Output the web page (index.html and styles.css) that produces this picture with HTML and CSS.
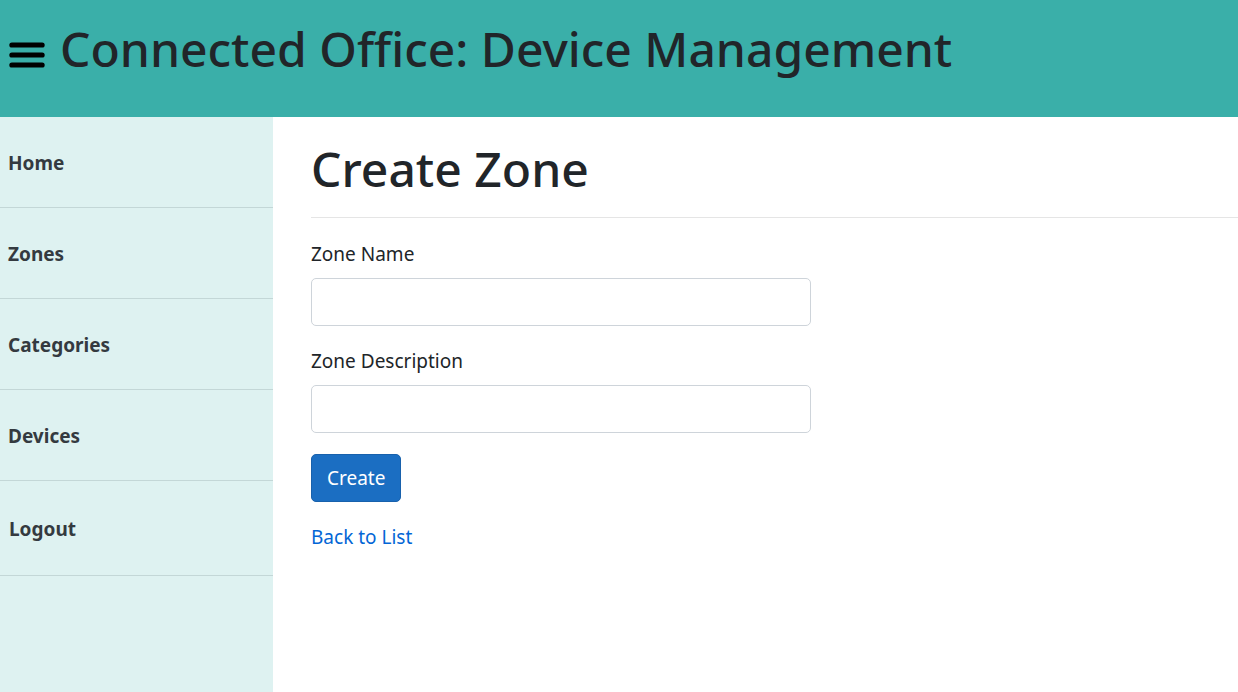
FILE: index.html
```html
<!DOCTYPE html>
<html lang="en">
<head>
<meta charset="utf-8">
<title>Create Zone</title>
<link rel="stylesheet" href="styles.css">
</head>
<body>
<header class="topbar">
  <button class="menu-toggle" type="button" aria-label="Toggle menu">
    <svg width="36" height="28" viewBox="0 0 36 28" aria-hidden="true">
      <path d="M2.9 4h30.2M2.9 14h30.2M2.9 24h30.2" stroke="#000" stroke-width="5.2" stroke-linecap="round"/>
    </svg>
  </button>
  <h1 class="brand">Connected Office: Device Management</h1>
</header>
<div class="layout">
  <nav class="sidebar">
    <a class="nav-item" href="#">Home</a>
    <a class="nav-item" href="#">Zones</a>
    <a class="nav-item" href="#">Categories</a>
    <a class="nav-item" href="#">Devices</a>
    <button class="nav-item nav-button" type="button">Logout</button>
  </nav>
  <main class="content">
    <h2 class="title">Create Zone</h2>
    <form class="form">
      <div class="field">
        <label class="label" for="zone-name">Zone Name</label>
        <input class="input" id="zone-name" type="text">
      </div>
      <div class="field">
        <label class="label" for="zone-description">Zone Description</label>
        <input class="input" id="zone-description" type="text">
      </div>
      <button class="submit" type="submit">Create</button>
    </form>
    <a class="back" href="#">Back to List</a>
  </main>
</div>
</body>
</html>
```
FILE: styles.css
```css
* { box-sizing: border-box; }
body {
  margin: 0;
  min-height: 100vh;
  display: flex;
  flex-direction: column;
  font-family: "Noto Sans", "Open Sans", sans-serif;
  font-size: 19px;
  font-variant-ligatures: none;
  line-height: 28px;
  color: #212529;
  background: #fff;
}
.topbar {
  display: flex;
  align-items: flex-start;
  gap: 15px;
  padding: 20px 9px 39px;
  background: #3aafa9;
}
.menu-toggle {
  display: flex;
  margin: 21px 0 0;
  padding: 0;
  border: 0;
  background: none;
}
.brand, .title {
  margin: 0;
  font-size: 48px;
  font-weight: 500;
  line-height: 58px;
}
.layout { display: flex; flex: 1; }
.sidebar {
  flex: none;
  width: 273px;
  background: #def2f1;
}
.nav-item {
  display: block;
  width: 100%;
  padding: 32px 8px 30px;
  border: 0;
  border-bottom: 1px solid #c3d7d7;
  background: none;
  color: #343a40;
  font: inherit;
  font-weight: 700;
  text-align: left;
  text-decoration: none;
}
.nav-button { padding: 34px 9px 32px; }
.content { flex: 1; padding: 23px 0 24px 38px; }
.title {
  padding-bottom: 19px;
  border-bottom: 1px solid #e5e5e5;
}
.form { width: 500px; max-width: 100%; padding-top: 22px; }
.field { margin-bottom: 21px; }
.label { display: block; margin-bottom: 10px; }
.input {
  display: block;
  width: 100%;
  height: 48px;
  padding: 8px 14px;
  border: 1px solid #ced4da;
  border-radius: 5px;
  font: inherit;
}
.submit {
  display: block;
  height: 48px;
  padding: 0 15px;
  border: 1px solid #1861ac;
  border-radius: 5px;
  background: #1b6ec2;
  color: #fff;
  font: inherit;
}
.back {
  display: inline-block;
  margin-top: 21px;
  color: #0366d6;
  text-decoration: none;
}
```
